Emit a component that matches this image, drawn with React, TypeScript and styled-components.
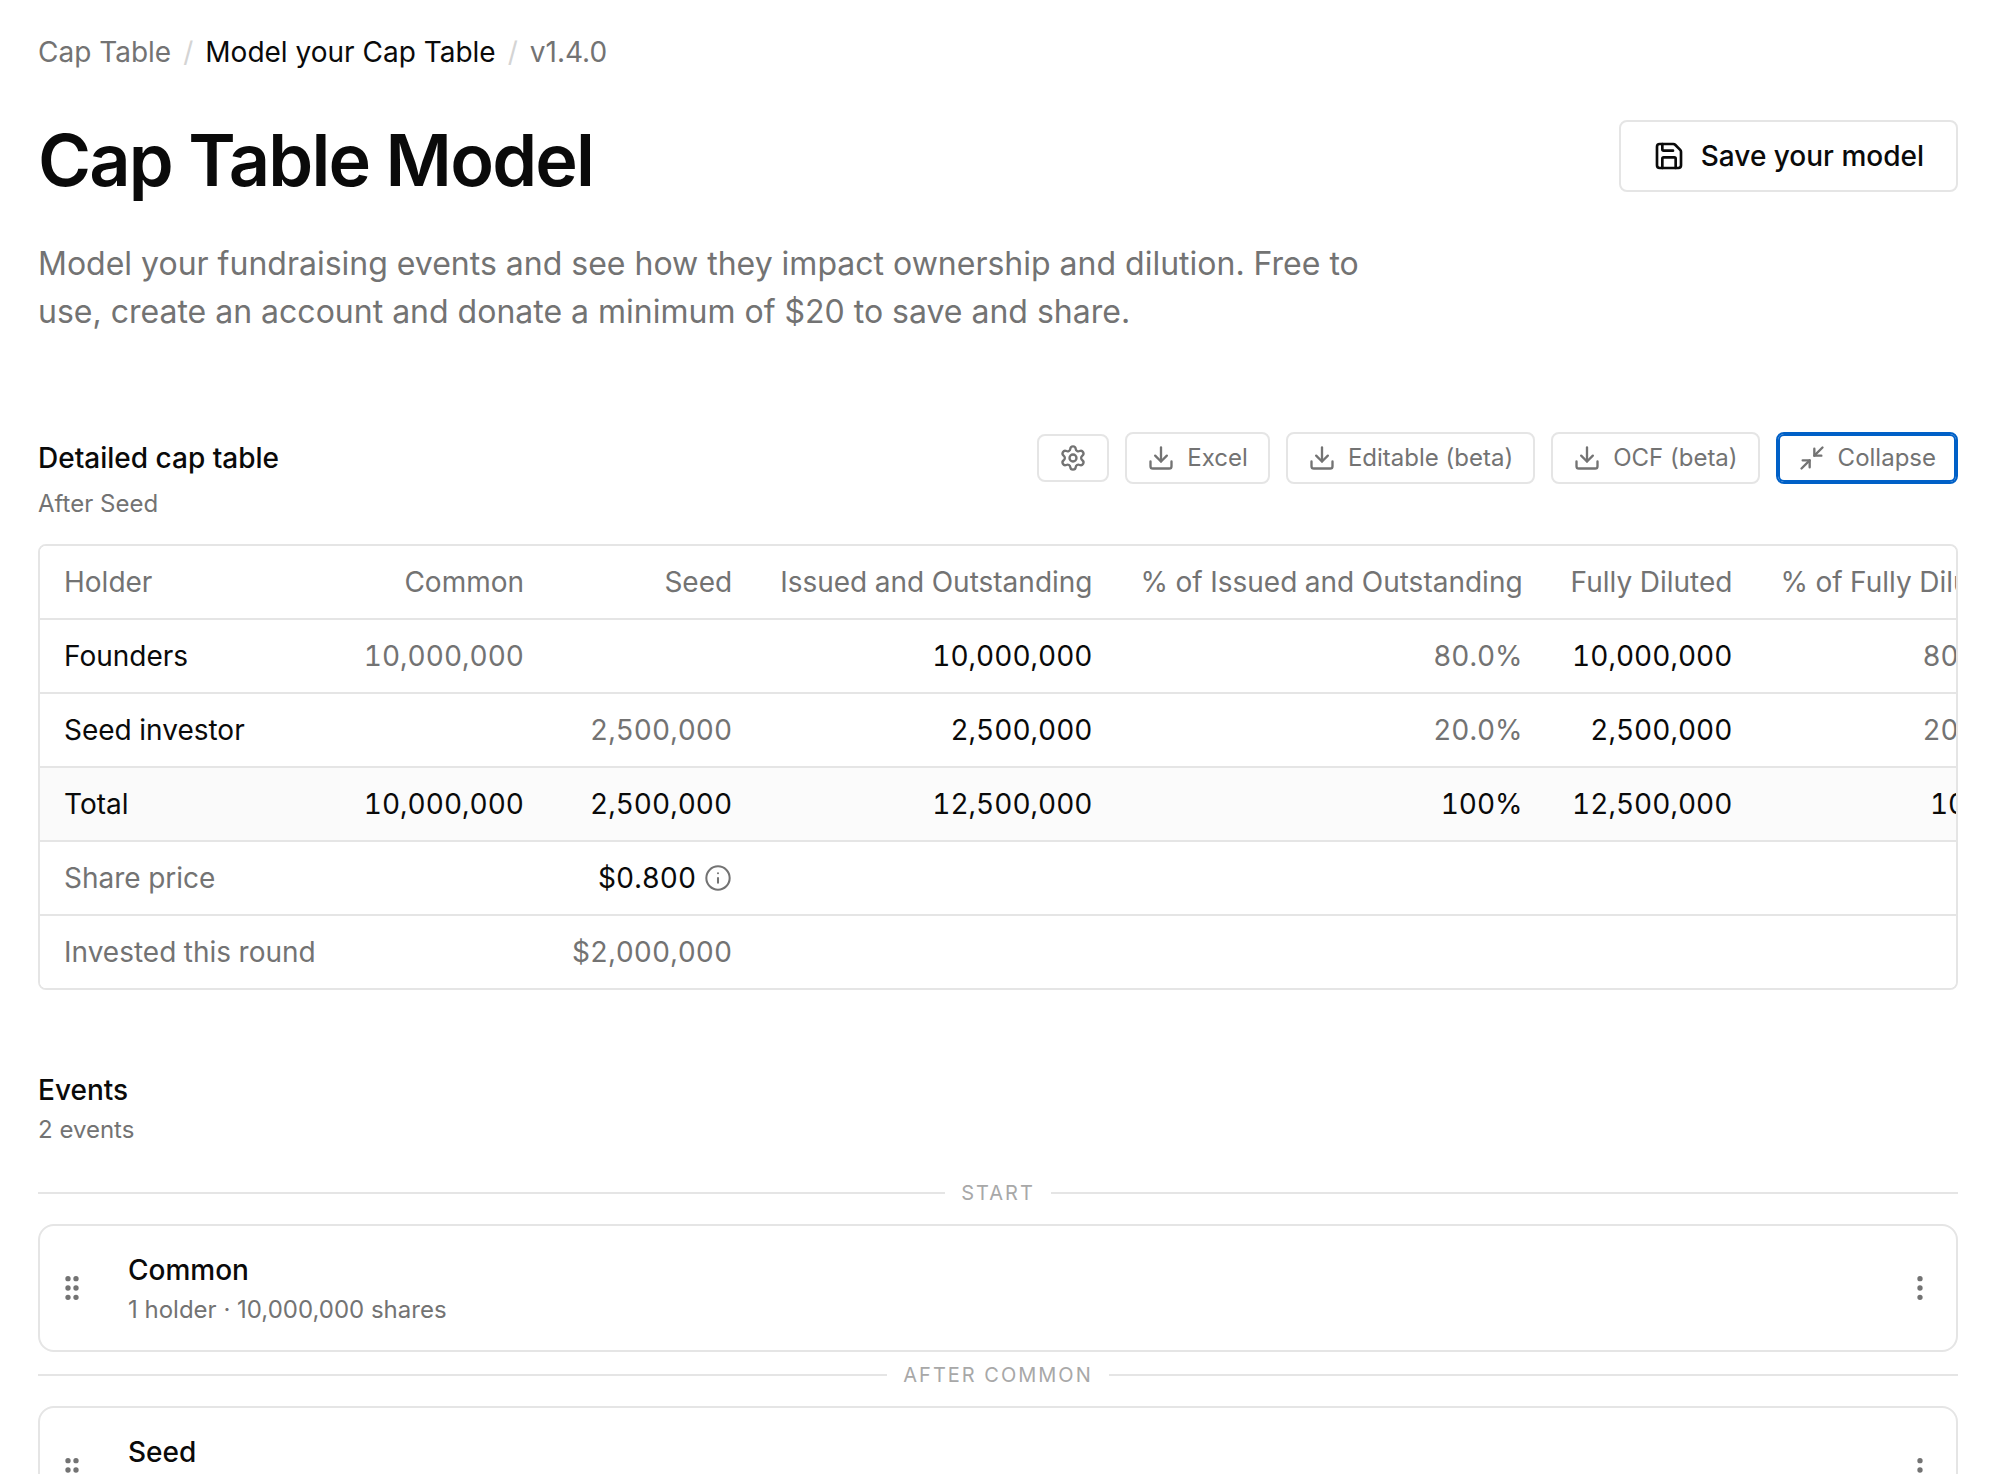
import React from 'react';
import styled, { createGlobalStyle } from 'styled-components';
import { Download, EllipsisVertical, GripVertical, Info, Minimize2, Save, Settings } from 'lucide-react';

const color = {
  ink: '#0a0a0a',
  muted: '#737373',
  faint: '#a8a8a8',
  slash: '#d4d4d4',
  line: '#e5e5e5',
  wash: '#fbfbfb',
  washPinned: '#fafafa',
  focus: '#0060c7',
};

const GlobalStyle = createGlobalStyle`
  *, *::before, *::after { box-sizing: border-box; }
  html { overflow: hidden auto; scrollbar-width: none; }
  body {
    margin: 0;
    background: #ffffff;
    color: ${color.ink};
    font-family: Inter, "Liberation Sans", sans-serif;
    font-size: 28px;
    line-height: 40px;
    -webkit-font-smoothing: antialiased;
  }
  h1, h2, h3, p, ol { margin: 0; padding: 0; }
  button { font: inherit; cursor: pointer; margin: 0; }
  svg { display: block; flex: none; }
`;

const Page = styled.main`
  padding: 32px 46px 32px 38px;
`;

const Crumbs = styled.nav`
  ol { display: flex; gap: 12px; list-style: none; }
  li { display: flex; gap: 12px; color: ${color.muted}; }
  li + li::before { content: "/"; color: ${color.slash}; }
  a { color: inherit; text-decoration: none; }
  a[aria-current] { color: ${color.ink}; }
`;

const Header = styled.header`
  display: flex;
  justify-content: space-between;
  align-items: flex-start;
  margin-top: 48px;
`;

const Title = styled.h1`
  font-size: 72px;
  line-height: 80px;
  font-weight: 600;
  letter-spacing: -0.025em;
`;

const Lead = styled.p`
  margin-top: 40px;
  max-width: 1344px;
  color: ${color.muted};
  font-size: 32px;
  line-height: 48px;
`;

const SaveButton = styled.button`
  display: flex;
  align-items: center;
  gap: 16px;
  height: 72px;
  padding: 0 32px;
  border: 2px solid ${color.line};
  border-radius: 8px;
  background: #ffffff;
  color: ${color.ink};
  font-weight: 500;
`;

const Section = styled.section<{ $gap: number }>`
  margin-top: ${(p) => p.$gap}px;
`;

const SectionHead = styled.div`
  display: flex;
  justify-content: space-between;
  align-items: center;
`;

const Heading = styled.h2`
  font-size: 28px;
  line-height: 40px;
  font-weight: 500;
`;

const Note = styled.p`
  && { margin-top: 4px; }
  color: ${color.muted};
  font-size: 24px;
  line-height: 32px;
`;

const Toolbar = styled.div`
  display: flex;
  align-items: center;
  gap: 16px;
`;

const ToolButton = styled.button<{ $icon?: boolean; $active?: boolean }>`
  display: flex;
  align-items: center;
  justify-content: center;
  gap: 12px;
  height: ${(p) => (p.$icon ? 48 : 52)}px;
  padding: 0 20px;
  border: 2px solid ${(p) => (p.$active ? color.focus : color.line)};
  box-shadow: ${(p) => (p.$active ? `inset 0 0 0 2px ${color.focus}` : 'none')};
  border-radius: 8px;
  background: #ffffff;
  color: ${color.muted};
  font-size: 24px;
  line-height: 32px;
`;

const TableFrame = styled.div`
  margin-top: 24px;
  overflow: hidden;
  border: 2px solid ${color.line};
  border-radius: 8px;
`;

const Table = styled.table`
  min-width: 100%;
  border-collapse: separate;
  border-spacing: 0;
  white-space: nowrap;
  font-variant-numeric: tabular-nums;

  th, td {
    padding: 16px 24px;
    border-bottom: 2px solid ${color.line};
    font-weight: 400;
    text-align: right;
  }
  th:first-child { text-align: left; }
  tbody tr:last-child > * { border-bottom: 0; }
`;

const Row = styled.tr<{ $total?: boolean }>`
  background: ${(p) => (p.$total ? color.wash : '#ffffff')};
  > th:first-child { background: ${(p) => (p.$total ? color.washPinned : '#ffffff')}; }
`;

const HeadCell = styled.th`
  color: ${color.muted};
`;

const RowHead = styled.th<{ $muted?: boolean }>`
  color: ${(p) => (p.$muted ? color.muted : color.ink)};
`;

const Cell = styled.td<{ $muted?: boolean }>`
  color: ${(p) => (p.$muted ? color.muted : color.ink)};
`;

const WithInfo = styled.span`
  display: inline-flex;
  align-items: center;
  gap: 8px;
  vertical-align: top;
`;

const InfoButton = styled.button`
  padding: 0;
  border: 0;
  background: none;
  color: ${color.muted};
`;

const EventList = styled.div`
  margin-top: 32px;
`;

const Divider = styled.div`
  display: flex;
  align-items: center;
  gap: 16px;
  margin: 8px 0 16px;
  color: ${color.faint};
  font-size: 20px;
  line-height: 30px;
  letter-spacing: 0.1em;
  text-transform: uppercase;
  &::before, &::after { content: ""; flex: 1; height: 2px; background: ${color.line}; }
`;

const EventCard = styled.article`
  display: flex;
  align-items: center;
  height: 128px;
  padding: 0 16px;
  border: 2px solid ${color.line};
  border-radius: 16px;
`;

const EventText = styled.div`
  flex: 1;
  margin-left: 40px;
  h3 { font-size: 28px; line-height: 40px; font-weight: 500; }
`;

const GhostButton = styled.button<{ $width: number }>`
  display: flex;
  justify-content: center;
  width: ${(p) => p.$width}px;
  padding: 0;
  border: 0;
  background: none;
  color: ${color.muted};
`;

const columns = ['Common', 'Seed', 'Issued and Outstanding', '% of Issued and Outstanding', 'Fully Diluted', '% of Fully Diluted'];

type Value = { text: string; muted?: boolean; info?: boolean };
type Line = { name: string; muted?: boolean; total?: boolean; values: (Value | null)[] };

const dim = (text: string): Value => ({ text, muted: true });
const ink = (text: string): Value => ({ text });

const lines: Line[] = [
  { name: 'Founders', values: [dim('10,000,000'), null, ink('10,000,000'), dim('80.0%'), ink('10,000,000'), dim('80.0%')] },
  { name: 'Seed investor', values: [null, dim('2,500,000'), ink('2,500,000'), dim('20.0%'), ink('2,500,000'), dim('20.0%')] },
  { name: 'Total', total: true, values: [ink('10,000,000'), ink('2,500,000'), ink('12,500,000'), ink('100%'), ink('12,500,000'), ink('100%')] },
  { name: 'Share price', muted: true, values: [null, { text: '$0.800', info: true }, null, null, null, null] },
  { name: 'Invested this round', muted: true, values: [null, dim('$2,000,000'), null, null, null, null] },
];

const events = [
  { before: 'Start', name: 'Common', detail: '1 holder · 10,000,000 shares' },
  { before: 'After Common', name: 'Seed', detail: '1 holder · 2,500,000 shares' },
];

export default function App() {
  return (
    <>
      <GlobalStyle />
      <Page>
        <Crumbs aria-label="Breadcrumb">
          <ol>
            <li><a href="#cap-table">Cap Table</a></li>
            <li><a href="#model" aria-current="page">Model your Cap Table</a></li>
            <li>v1.4.0</li>
          </ol>
        </Crumbs>

        <Header>
          <div>
            <Title>Cap Table Model</Title>
            <Lead>
              Model your fundraising events and see how they impact ownership and dilution. Free to use, create an
              account and donate a minimum of $20 to save and share.
            </Lead>
          </div>
          <SaveButton type="button">
            <Save size={32} aria-hidden="true" />
            Save your model
          </SaveButton>
        </Header>

        <Section $gap={96}>
          <SectionHead>
            <Heading>Detailed cap table</Heading>
            <Toolbar>
              <ToolButton type="button" $icon aria-label="Settings"><Settings size={28} /></ToolButton>
              <ToolButton type="button"><Download size={28} />Excel</ToolButton>
              <ToolButton type="button"><Download size={28} />Editable (beta)</ToolButton>
              <ToolButton type="button"><Download size={28} />OCF (beta)</ToolButton>
              <ToolButton type="button" $active><Minimize2 size={28} />Collapse</ToolButton>
            </Toolbar>
          </SectionHead>
          <Note>After Seed</Note>

          <TableFrame>
            <Table>
              <thead>
                <Row>
                  <HeadCell scope="col">Holder</HeadCell>
                  {columns.map((c) => <HeadCell key={c} scope="col">{c}</HeadCell>)}
                </Row>
              </thead>
              <tbody>
                {lines.map((line) => (
                  <Row key={line.name} $total={line.total}>
                    <RowHead scope="row" $muted={line.muted}>{line.name}</RowHead>
                    {line.values.map((v, i) => (
                      <Cell key={columns[i]} $muted={v?.muted}>
                        {v?.info ? (
                          <WithInfo>
                            {v.text}
                            <InfoButton type="button" aria-label="About share price">
                              <Info size={28} strokeWidth={1.75} />
                            </InfoButton>
                          </WithInfo>
                        ) : v?.text}
                      </Cell>
                    ))}
                  </Row>
                ))}
              </tbody>
            </Table>
          </TableFrame>
        </Section>

        <Section $gap={80}>
          <Heading>Events</Heading>
          <Note>2 events</Note>
          <EventList>
            {events.map((e) => (
              <React.Fragment key={e.name}>
                <Divider>{e.before}</Divider>
                <EventCard>
                  <GhostButton type="button" $width={32} aria-label={`Move ${e.name}`}><GripVertical size={32} /></GhostButton>
                  <EventText>
                    <h3>{e.name}</h3>
                    <Note>{e.detail}</Note>
                  </EventText>
                  <GhostButton type="button" $width={40} aria-label={`Options for ${e.name}`}><EllipsisVertical size={32} /></GhostButton>
                </EventCard>
              </React.Fragment>
            ))}
          </EventList>
        </Section>
      </Page>
    </>
  );
}
